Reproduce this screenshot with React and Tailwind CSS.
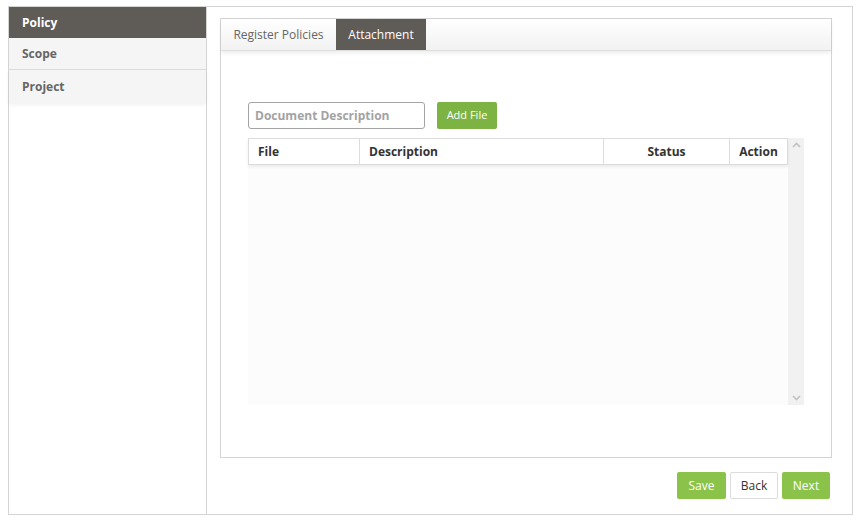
import React from "react";

export default function App() {
  return (
    <div className="w-[864px] h-[521px] bg-white pt-[6px] pl-[8px]" style={{ fontFamily: '"Open Sans", sans-serif' }}>
      <div className="w-[845px] h-[509px] border border-[#d4d4d4] flex">
        {/* Sidebar */}
        <div className="w-[198px] border-r border-[#d4d4d4] flex flex-col">
          <div className="h-[31px] bg-[#5f5b56] text-white font-bold text-[12px] flex items-center pl-[13px]">Policy</div>
          <div className="h-[32px] bg-[#f5f5f5] text-[#666] font-bold text-[12px] flex items-center pl-[13px] border-b border-[#dcdcdc]">Scope</div>
          <div className="h-[33px] bg-[#f5f5f5] text-[#666] font-bold text-[12px] flex items-center pl-[13px] shadow-[0_2px_4px_rgba(0,0,0,0.06)]">Project</div>
        </div>
        {/* Main */}
        <div className="flex-1 flex flex-col pt-[11px] pl-[13px] pr-[20px]">
          <div className="h-[440px] border border-[#d4d4d4] flex flex-col">
            <div className="h-[32px] flex bg-gradient-to-b from-white to-[#f2f2f2] border-b border-[#dedede] shadow-[0_2px_4px_rgba(0,0,0,0.08)]">
              <div className="w-[115px] flex items-center justify-center text-[12px] text-[#666]">Register Policies</div>
              <div className="w-[90px] bg-[#5f5b56] text-white flex items-center justify-center text-[12px]">Attachment</div>
            </div>
            <div className="pl-[27px] pt-[51px]">
              <div className="flex items-center gap-[12px]">
                <input
                  className="w-[177px] h-[27px] border border-[#a3a3a3] rounded-[3px] px-[6px] text-[12px] font-bold text-[#333] placeholder-[#a3a3a3] outline-none"
                  placeholder="Document Description"
                  style={{ fontFamily: '"Open Sans", sans-serif' }}
                />
                <button className="w-[60px] h-[27px] bg-[#7cb342] rounded-[2px] text-white text-[11px]">Add File</button>
              </div>
              <div className="mt-[9px] flex w-[556px]">
                <div className="w-[540px] flex flex-col">
                  <div className="h-[27px] flex border border-[#dcdcdc] bg-white text-[12px] font-bold text-[#333] shadow-[0_2px_3px_rgba(0,0,0,0.07)] relative z-10">
                    <div className="w-[111px] border-r border-[#dcdcdc] flex items-center pl-[9px]">File</div>
                    <div className="w-[244px] border-r border-[#dcdcdc] flex items-center pl-[9px]">Description</div>
                    <div className="w-[126px] border-r border-[#dcdcdc] flex items-center justify-center">Status</div>
                    <div className="flex-1 flex items-center justify-center">Action</div>
                  </div>
                  <div className="h-[240px] bg-[#fcfcfc]"></div>
                </div>
                <div className="w-[16px] h-[267px] bg-[#f1f1f1] flex flex-col justify-between items-center py-[4px]">
                  <svg width="9" height="6" viewBox="0 0 9 6"><path d="M1 5 L4.5 1.5 L8 5" stroke="#c2c2c2" strokeWidth="1.6" fill="none" /></svg>
                  <svg width="9" height="6" viewBox="0 0 9 6"><path d="M1 1 L4.5 4.5 L8 1" stroke="#c2c2c2" strokeWidth="1.6" fill="none" /></svg>
                </div>
              </div>
            </div>
          </div>
          <div className="flex justify-end gap-[4px] mt-[14px] pr-[2px]">
            <button className="w-[49px] h-[27px] bg-[#8bc34a] rounded-[2px] text-white text-[12px]">Save</button>
            <button className="w-[48px] h-[27px] bg-white border border-[#dcdcdc] rounded-[2px] text-[#333] text-[12px]">Back</button>
            <button className="w-[48px] h-[27px] bg-[#8bc34a] rounded-[2px] text-white text-[12px]">Next</button>
          </div>
        </div>
      </div>
    </div>
  );
}
